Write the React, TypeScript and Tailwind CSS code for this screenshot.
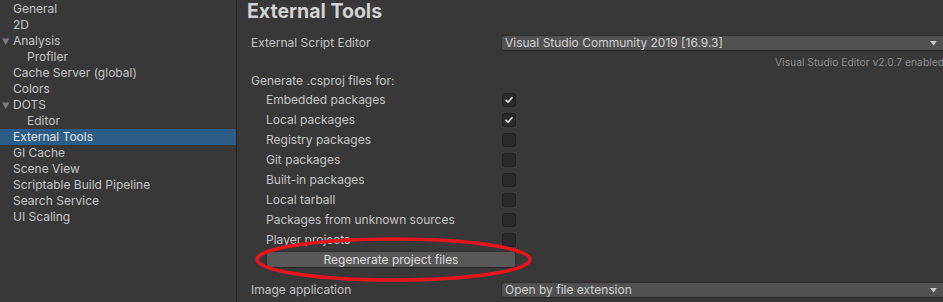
import React from "react";

const sidebar: { label: string; level: number; arrow?: boolean; selected?: boolean }[] = [
  { label: "General", level: 0 },
  { label: "2D", level: 0 },
  { label: "Analysis", level: 0, arrow: true },
  { label: "Profiler", level: 1 },
  { label: "Cache Server (global)", level: 0 },
  { label: "Colors", level: 0 },
  { label: "DOTS", level: 0, arrow: true },
  { label: "Editor", level: 1 },
  { label: "External Tools", level: 0, selected: true },
  { label: "GI Cache", level: 0 },
  { label: "Scene View", level: 0 },
  { label: "Scriptable Build Pipeline", level: 0 },
  { label: "Search Service", level: 0 },
  { label: "UI Scaling", level: 0 },
];

const items: { label: string; checked: boolean }[] = [
  { label: "Embedded packages", checked: true },
  { label: "Local packages", checked: true },
  { label: "Registry packages", checked: false },
  { label: "Git packages", checked: false },
  { label: "Built-in packages", checked: false },
  { label: "Local tarball", checked: false },
  { label: "Packages from unknown sources", checked: false },
  { label: "Player projects", checked: false },
];

function Arrow() {
  return (
    <svg width="9" height="6" viewBox="0 0 9 6" className="shrink-0">
      <path d="M1 1 L8 1 L4.5 5.5 Z" fill="#c8c8c8" />
    </svg>
  );
}

function Dropdown({ text }: { text: string }) {
  return (
    <div className="h-[16px] flex-1 flex items-center justify-between rounded-l-[3px] bg-[#515151] border-y border-l border-[#303030] border-b-[#242424] pl-[3px] pr-[5px] text-[12px] text-[#d2d2d2] leading-none">
      <span>{text}</span>
      <Arrow />
    </div>
  );
}

function Checkbox({ checked }: { checked: boolean }) {
  return (
    <div className="w-[14px] h-[14px] rounded-[3px] bg-[#2a2a2a] border border-[#212121] flex items-center justify-center">
      {checked && (
        <svg width="10" height="10" viewBox="0 0 10 10">
          <path d="M2 5.2 L4 7.2 L8 2.8" stroke="#e8e8e8" strokeWidth="1.6" fill="none" strokeLinecap="round" strokeLinejoin="round" />
        </svg>
      )}
    </div>
  );
}

export default function App() {
  return (
    <div
      className="w-[943px] h-[302px] bg-[#383838] flex overflow-hidden text-[#c4c4c4] text-[12px]"
      style={{ fontFamily: "Inter, 'Noto Sans', sans-serif" }}
    >
      <div className="w-[236px] shrink-0 pt-[1px] flex flex-col">
        {sidebar.map((s) => (
          <div
            key={s.label}
            className={`h-[16px] flex items-center relative leading-none ${s.selected ? "bg-[#2c5d87] text-[#e4e4e4]" : ""}`}
          >
            {s.arrow && (
              <svg width="8" height="8" viewBox="0 0 8 8" className="absolute left-[2px] top-[5px]">
                <path d="M0 0.5 L7.5 0.5 L3.75 7 Z" fill="#7a7a7a" />
              </svg>
            )}
            <span className={s.level === 1 ? "pl-[27px]" : "pl-[13px]"}>{s.label}</span>
          </div>
        ))}
      </div>
      <div className="w-[1px] shrink-0 bg-[#232323]" />
      <div className="flex-1 pl-[14px] flex flex-col relative">
        <div className="h-[34px]">
          <div className="-ml-[4px] text-[19.5px] font-bold text-[#d2d2d2] leading-[22px]">External Tools</div>
        </div>
        <div className="h-[18px] flex items-center">
          <div className="w-[250px] shrink-0">External Script Editor</div>
          <Dropdown text="Visual Studio Community 2019 [16.9.3]" />
        </div>
        <div className="h-[16px] mt-[3px] flex items-center justify-end text-[10.3px] text-[#8d8d8d] whitespace-nowrap -mr-[1px]">
          Visual Studio Editor v2.0.7 enabled
        </div>
        <div className="h-[18px] mt-[1px] flex items-center">Generate .csproj files for:</div>
        <div className="flex flex-col">
          {items.map((it) => (
            <div key={it.label} className="h-[20px] flex items-center">
              <div className="w-[250px] shrink-0 pl-[15px]">{it.label}</div>
              <div className="pl-[1px]">
                <Checkbox checked={it.checked} />
              </div>
            </div>
          ))}
        </div>
        <div className="mt-[1px] pl-[15px] flex">
          <div className="w-[250px] h-[17px] rounded-[3px] bg-[#585858] border border-[#303030] border-b-[#242424] flex items-center justify-center text-[#dedede] leading-none">
            Regenerate project files
          </div>
        </div>
        <div className="h-[18px] mt-[13px] flex items-center">
          <div className="w-[250px] shrink-0">Image application</div>
          <Dropdown text="Open by file extension" />
        </div>
        <svg
          className="absolute left-[17px] top-[236px] pointer-events-none"
          width="280"
          height="47"
          viewBox="0 0 280 47"
        >
          <ellipse cx="139.5" cy="23.5" rx="136.5" ry="20.5" fill="none" stroke="#e8141c" strokeWidth="3.5" />
        </svg>
      </div>
    </div>
  );
}
